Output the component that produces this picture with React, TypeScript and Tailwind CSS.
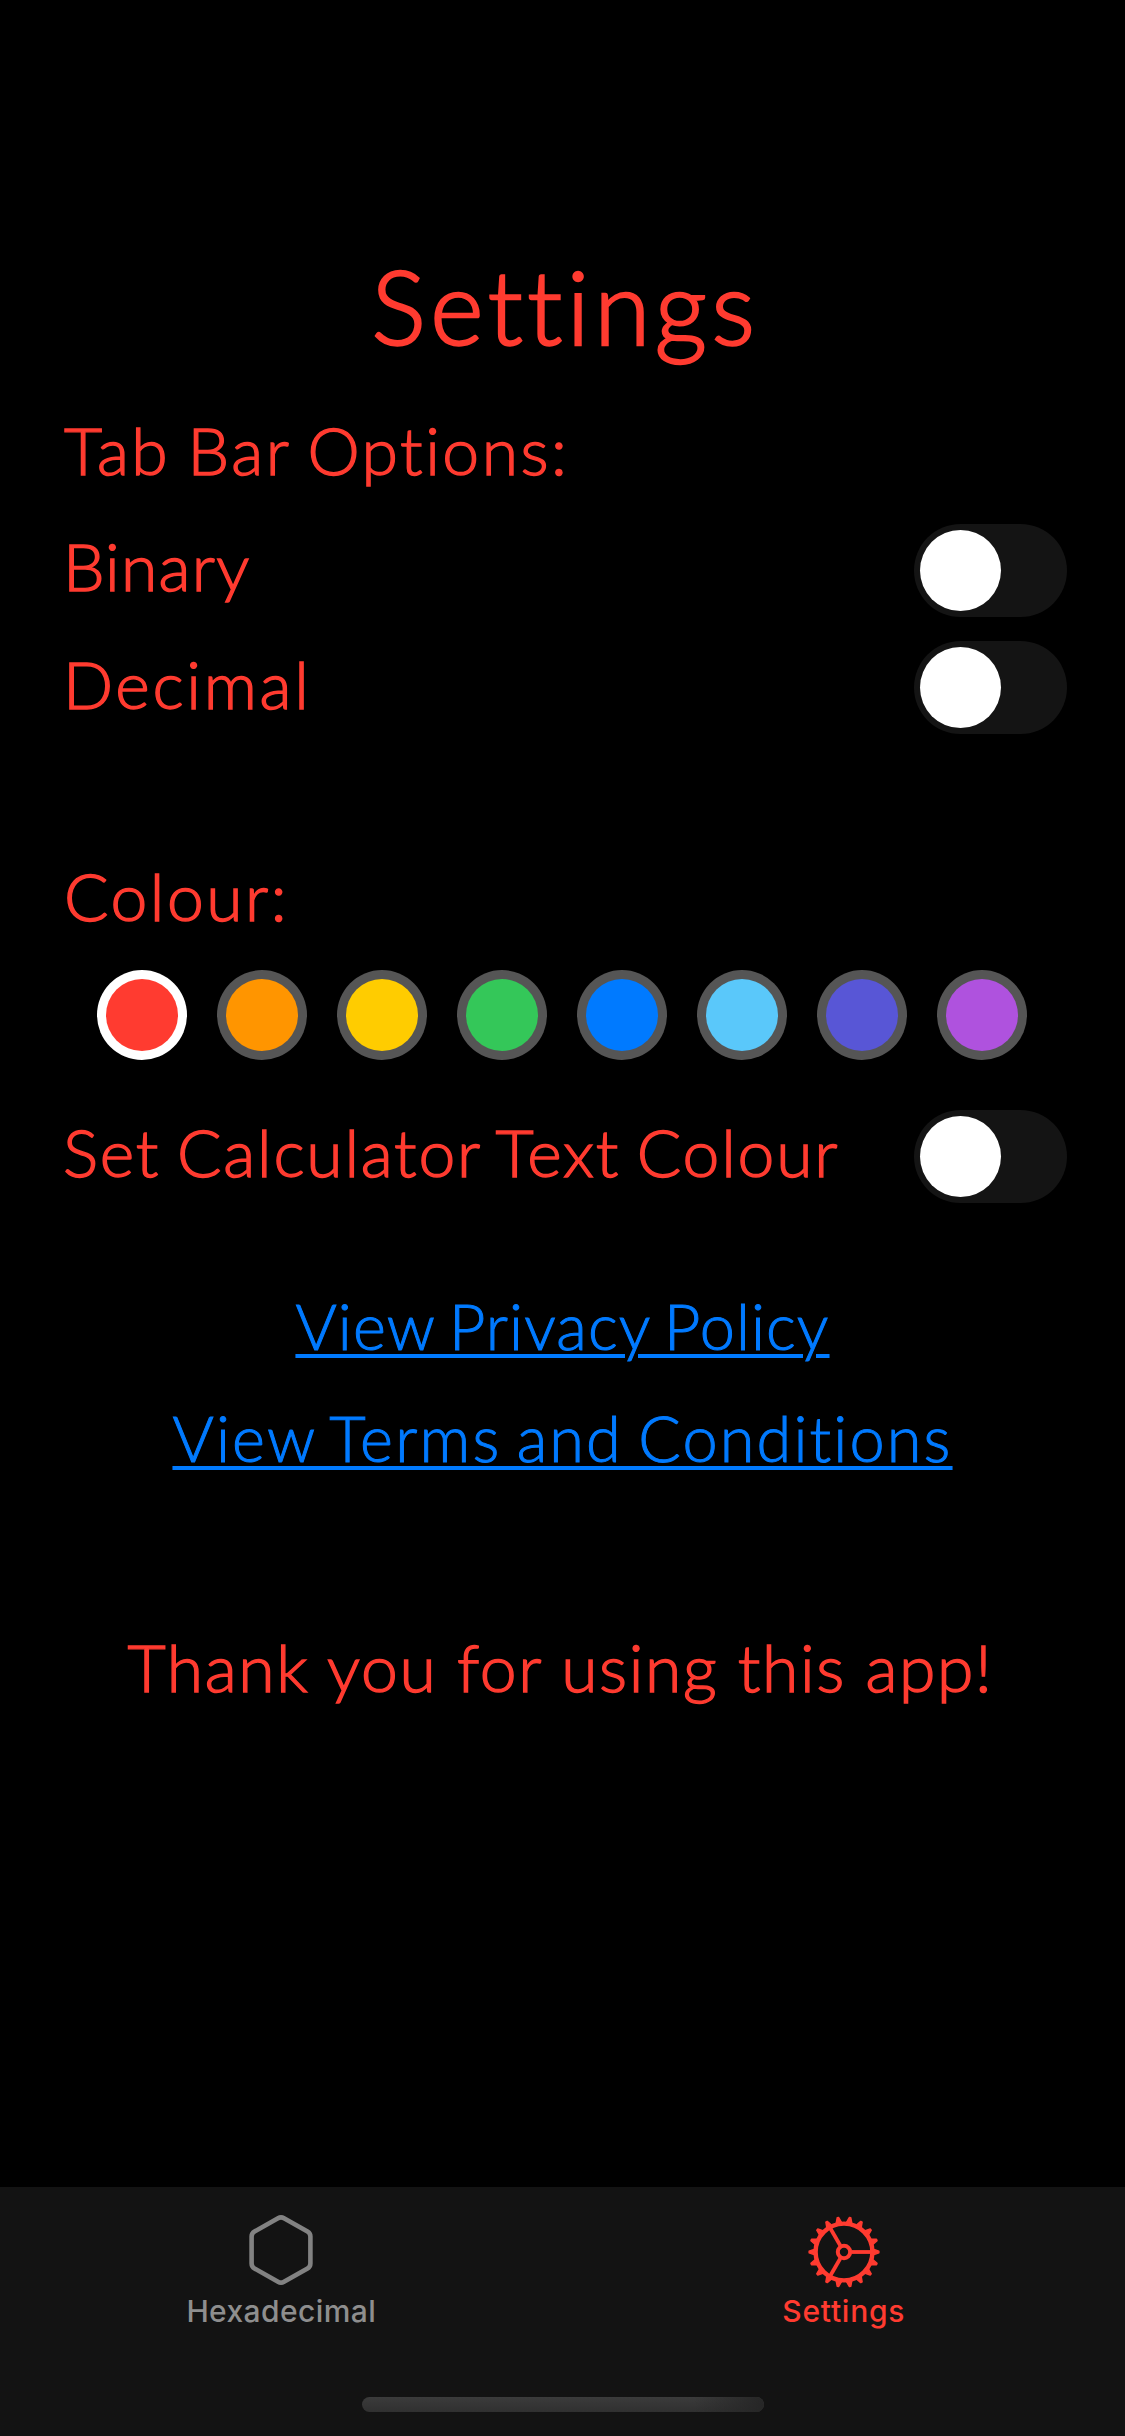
import { useState, type ReactNode } from "react";

const swatches = [
  { name: "Red", fill: "bg-[#ff3b30]" },
  { name: "Orange", fill: "bg-[#ff9500]" },
  { name: "Yellow", fill: "bg-[#ffcc00]" },
  { name: "Green", fill: "bg-[#34c759]" },
  { name: "Blue", fill: "bg-[#007aff]" },
  { name: "Teal", fill: "bg-[#5ac8fa]" },
  { name: "Indigo", fill: "bg-[#5856d6]" },
  { name: "Purple", fill: "bg-[#af52de]" },
];

const body = "text-[66px] leading-[79px] whitespace-nowrap [-webkit-text-stroke:1.4px_currentColor]";
const link =
  "block w-fit text-[63px] leading-[75px] whitespace-nowrap text-[#007aff] underline decoration-[4px] underline-offset-[4px] [word-spacing:-4px] [-webkit-text-stroke:1px_currentColor]";

function Toggle({ label }: { label: string }) {
  const [on, setOn] = useState(false);
  return (
    <button
      type="button"
      role="switch"
      aria-checked={on}
      aria-label={label}
      onClick={() => setOn(!on)}
      className={`flex h-[93px] w-[153px] shrink-0 items-center rounded-full p-[6px] ${on ? "justify-end bg-[#30d158]" : "justify-start bg-[#141414]"}`}
    >
      <span className="size-[81px] rounded-full bg-white" />
    </button>
  );
}

function Row({ label, className, children }: { label: string; className: string; children: ReactNode }) {
  return (
    <div className="flex h-[93px] items-center justify-between pr-[58px] pl-[63px]">
      <span className={`${body} ${className}`}>{children}</span>
      <Toggle label={label} />
    </div>
  );
}

function HexagonIcon() {
  return (
    <svg width="66" height="72" viewBox="0 0 66 72" fill="none" stroke="#828282" strokeWidth="4.6" strokeLinejoin="round">
      <path d="M30 4.2Q33 2.500 36 4.200L59.500 17.500Q62.400 19.200 62.400 22.500V49.500Q62.400 52.800 59.500 54.500L36 67.800Q33 69.500 30 67.800L6.500 54.500Q3.600 52.800 3.600 49.500V22.500Q3.600 19.200 6.500 17.500Z" />
    </svg>
  );
}

function GearIcon() {
  const teeth = Array.from({ length: 18 }, (_, i) => i * 20);
  return (
    <svg width="74" height="74" viewBox="-37 -37 74 74" fill="none" stroke="#ff3b30">
      <circle r="28.400" strokeWidth="4.400" />
      <circle r="6.200" strokeWidth="4" />
      {[0, 120, 240].map((a) => (
        <path key={a} d="M7.500 0H28" strokeWidth="3.800" transform={`rotate(${a})`} />
      ))}
      {teeth.map((a) => (
        <path key={a} d="M30 -2.600L34.900 -0.800V0.800L30 2.600Z" fill="#ff3b30" strokeWidth="1.400" strokeLinejoin="round" transform={`rotate(${a})`} />
      ))}
    </svg>
  );
}

export default function App() {
  const [selected, setSelected] = useState("Red");
  return (
    <div className="flex h-[2436px] w-[1125px] flex-col overflow-hidden bg-black font-['Lato',sans-serif] font-light text-[#ff3b30]">
      <main className="flex min-h-0 flex-1 flex-col pt-[244px]">
        <h1 className="pl-[6px] text-center text-[102px] leading-[123px] tracking-[4.600px] [-webkit-text-stroke:2.4px_currentColor]">Settings</h1>

        <h2 className={`${body} mt-[43px] pl-[64px] tracking-[2.500px] [word-spacing:-3px]`}>Tab Bar Options:</h2>
        <div className="mt-[35px] flex flex-col gap-[24px]">
          <Row label="Binary" className="pb-[10px] tracking-[1.200px]">Binary</Row>
          <Row label="Decimal" className="pb-[9px] tracking-[2.700px]">Decimal</Row>
        </div>

        <h2 className={`${body} mt-[122px] pl-[64px] tracking-[2.500px]`}>Colour:</h2>
        <div className="mt-[35px] flex gap-[30px] pl-[97px]">
          {swatches.map((s) => (
            <button
              key={s.name}
              type="button"
              aria-label={s.name}
              onClick={() => setSelected(s.name)}
              className={`size-[90px] rounded-full p-[9px] ${s.name === selected ? "bg-white" : "bg-[#555555]"}`}
            >
              <span className={`block size-[72px] rounded-full ${s.fill}`} />
            </button>
          ))}
        </div>
        <div className="mt-[50px]">
          <Row label="Set Calculator Text Colour" className="pb-[10px] tracking-[1.780px] [word-spacing:-3px]">Set Calculator Text Colour</Row>
        </div>

        <div className="mt-[85px] flex flex-col items-center gap-[37px]">
          <a href="#privacy" className={`${link} tracking-[1.100px]`}>View Privacy Policy</a>
          <a href="#terms" className={`${link} tracking-[2.160px]`}>View Terms and Conditions</a>
        </div>

        <p className={`${body} mt-[152px] pr-[4px] text-center tracking-[1.620px]`}>Thank you for using this app!</p>
      </main>

      <nav className="flex h-[249px] flex-col bg-[#131313] font-['Inter',sans-serif] text-[30px] leading-[36px] font-medium">
        <div className="flex flex-1">
          <div className="flex flex-1 flex-col items-center pt-[27px] text-[#8e8e8e]">
            <HexagonIcon />
            <span className="mt-[7px] tracking-[0.400px]">Hexadecimal</span>
          </div>
          <div className="flex flex-1 flex-col items-center pt-[28px]">
            <GearIcon />
            <span className="mt-[4px] tracking-[0.740px]">Settings</span>
          </div>
        </div>
        <div className="mx-auto mb-[24px] flex h-[15px] w-[402px] justify-end overflow-hidden rounded-full bg-linear-to-b from-[#3b3b3b] to-[#303030]">
          <span className="h-full w-[70px] bg-linear-to-r from-[#262626]/0 to-[#262626]" />
        </div>
      </nav>
    </div>
  );
}
